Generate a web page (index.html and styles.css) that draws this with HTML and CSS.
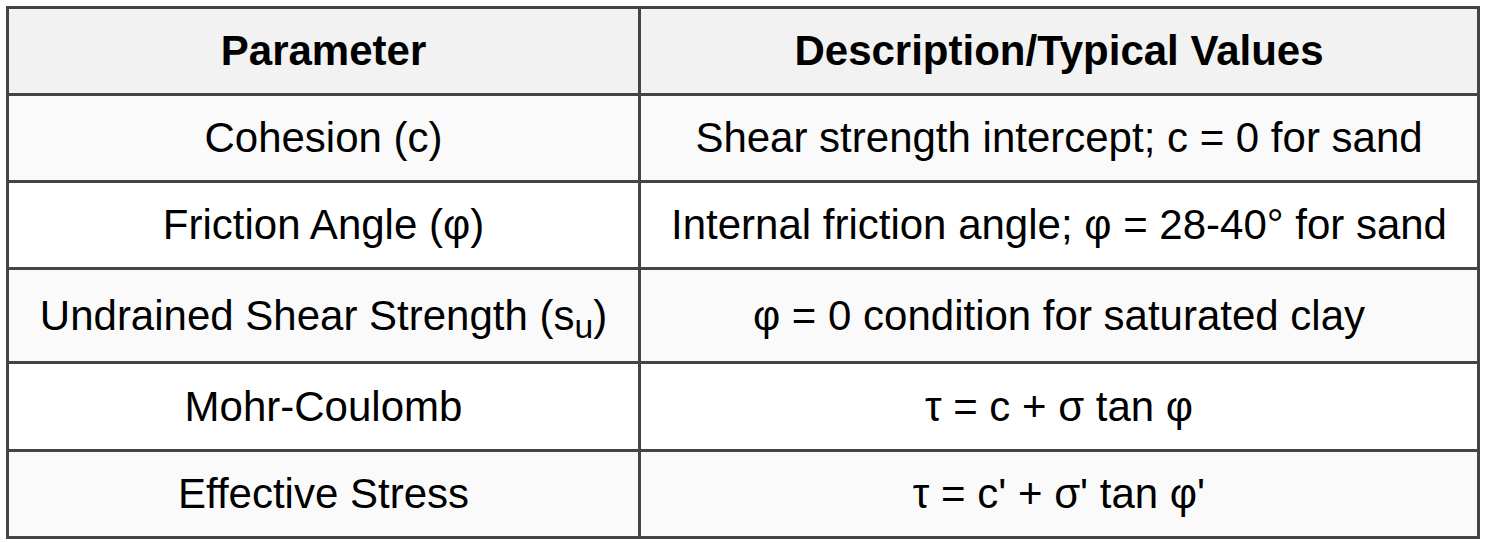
FILE: index.html
```html
<!DOCTYPE html>
<html>
<head>
<meta charset="utf-8">
<link rel="stylesheet" href="styles.css">
</head>
<body>
<table class="params">
  <colgroup>
    <col class="col-param">
    <col class="col-desc">
  </colgroup>
  <thead>
    <tr class="row-head">
      <th>Parameter</th>
      <th>Description/Typical Values</th>
    </tr>
  </thead>
  <tbody>
    <tr class="row-std">
      <td>Cohesion (c)</td>
      <td>Shear strength intercept; c = 0 for sand</td>
    </tr>
    <tr class="row-std">
      <td>Friction Angle (φ)</td>
      <td>Internal friction angle; φ = 28-40° for sand</td>
    </tr>
    <tr class="row-sub">
      <td>Undrained Shear Strength (s<sub>u</sub>)</td>
      <td>φ = 0 condition for saturated clay</td>
    </tr>
    <tr class="row-greek">
      <td>Mohr-Coulomb</td>
      <td>τ = c + σ tan φ</td>
    </tr>
    <tr class="row-std">
      <td>Effective Stress</td>
      <td>τ = c' + σ' tan φ'</td>
    </tr>
  </tbody>
</table>
</body>
</html>
```

FILE: styles.css
```css
html, body {
  margin: 0;
  padding: 0;
  background: #ffffff;
}

body {
  padding: 6px;
  font-family: "Liberation Sans", Arial, sans-serif;
  color: #000000;
}

.params {
  border-collapse: separate;
  border-spacing: 0;
  width: 1474px;
  table-layout: fixed;
  border-top: 3px solid #444444;
  border-left: 3px solid #444444;
  font-size: 42px;
}

.col-param { width: 632px; }
.col-desc { width: 839px; }

.params th,
.params td {
  border-right: 3px solid #444444;
  border-bottom: 3px solid #444444;
  padding: 0;
  text-align: center;
  vertical-align: middle;
  line-height: 48px;
  height: 84px;
  box-sizing: content-box;
}

.params th {
  background: #f2f2f2;
  font-weight: bold;
}

.params tbody tr:nth-child(odd) td {
  background: #fafafa;
}

.params tbody tr:nth-child(even) td {
  background: #ffffff;
}

.row-sub td { height: 91px; }
.row-greek td { height: 85px; }

sub {
  font-size: 0.8em;
  line-height: 0;
  vertical-align: -0.25em;
}
```
